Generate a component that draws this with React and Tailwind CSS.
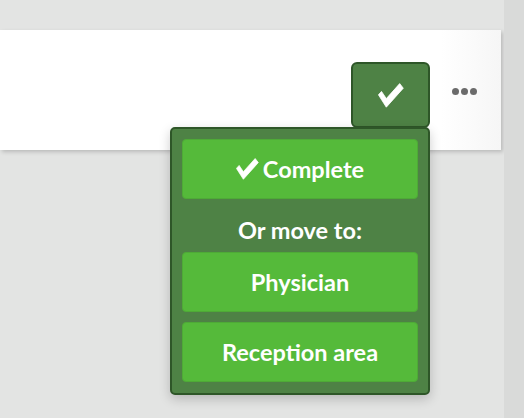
import React from 'react';

const CheckIcon = ({ className }) => (
  <svg viewBox="0 0 26 25" className={className} fill="currentColor">
    <path
      d="M21.7 0.6 L25.3 5.2 L8.3 24.2 L0.4 11.8 L3.5 8.4 L8.3 15.6 Z"
      stroke="currentColor"
      strokeWidth="0.8"
      strokeLinejoin="round"
    />
  </svg>
);

const MenuButton = ({ children }) => (
  <button className="w-full h-[60px] rounded-[4px] bg-[#55ba3a] border border-[#4eab36] text-white text-[23.5px] font-bold leading-[28px] flex items-center justify-center gap-[4px]">
    {children}
  </button>
);

const App = () => {
  return (
    <div
      className="w-[524px] h-[418px] bg-[#e3e4e3] flex overflow-hidden"
      style={{ fontFamily: 'Lato, "Open Sans", sans-serif' }}
    >
      <div className="w-[504px] pt-[30px]">
        {/* Card */}
        <div className="w-[501px] h-[120px] bg-gradient-to-r from-white from-[88%] to-[#f6f6f6] shadow-[2px_2px_4px_rgba(0,0,0,0.18)] flex justify-end items-start pt-[32px] pr-[24px]">
          <div className="relative">
            <button className="w-[79px] h-[66px] rounded-[6px] bg-[#4e8245] border-2 border-[#2e5628] text-white flex items-center justify-center">
              <CheckIcon className="w-[26px] h-[25px]" />
            </button>

            {/* Dropdown */}
            <div className="absolute right-0 top-[65px] w-[260px] rounded-[5px] bg-[#4e8245] border-2 border-[#2e5628] p-[10px] pb-[11px] shadow-[0_4px_12px_rgba(0,0,0,0.2)] z-10">
              <MenuButton>
                <CheckIcon className="w-[23px] h-[22px]" />
                <span>Complete</span>
              </MenuButton>
              <div className="h-[53px] flex items-end justify-center pb-[8px] text-white text-[23.5px] font-bold leading-[28px]">
                Or move to:
              </div>
              <div className="flex flex-col gap-[10px]">
                <MenuButton>Physician</MenuButton>
                <MenuButton>Reception area</MenuButton>
              </div>
            </div>
          </div>
          <div className="ml-[22px] mt-[26px] flex gap-[2px]">
            <span className="w-[7px] h-[7px] rounded-full bg-[#6b6b6b]" />
            <span className="w-[7px] h-[7px] rounded-full bg-[#6b6b6b]" />
            <span className="w-[7px] h-[7px] rounded-full bg-[#6b6b6b]" />
          </div>
        </div>
      </div>
      <div className="flex-1 bg-[#d9dad9]" />
    </div>
  );
};

export default App;
